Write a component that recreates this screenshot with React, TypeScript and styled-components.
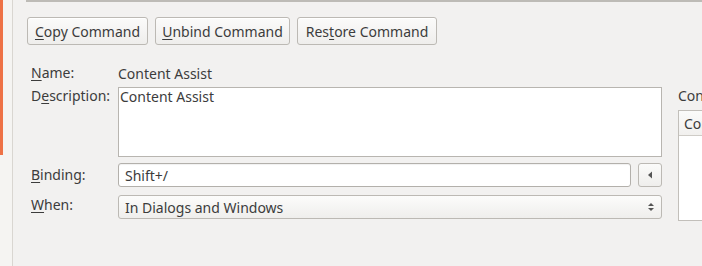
import React from "react";
import styled, { createGlobalStyle } from "styled-components";

const Global = createGlobalStyle`
  html, body { margin: 0; padding: 0; background: #f2f1f0; }
  body { font-family: "Noto Sans", "DejaVu Sans", sans-serif; font-size: 14px; color: #3c3c3c; }
  * { box-sizing: border-box; }
`;

const Page = styled.div`
  display: flex;
  width: 702px;
  height: 266px;
  overflow: hidden;
  background: #f2f1f0;
`;

const Sidebar = styled.div`
  width: 13px;
  flex: none;
  border-right: 1px solid #d9d6d1;
  background: #f5f4f2;
`;

const OrangeBar = styled.div`
  width: 3px;
  height: 155px;
  background: #ee7246;
`;

const Main = styled.div`
  flex: 1;
  padding-left: 14px;
  display: flex;
  flex-direction: column;
  min-width: 0;
`;

const TopRule = styled.div`
  height: 2px;
  background: #bdbbb6;
  margin-left: -1px;
  margin-right: -20px;
`;

const ButtonBar = styled.div`
  display: flex;
  gap: 7px;
  margin-top: 15px;
`;

const Button = styled.button<{ $w: number }>`
  width: ${(p) => p.$w}px;
  height: 28px;
  border: 1px solid #bcb9b4;
  border-radius: 3px;
  background: linear-gradient(#fbfbfa, #efeeec);
  font: inherit;
  color: #3c3c3c;
  padding: 0;
  box-shadow: inset 0 1px 0 #ffffff;
`;

const U = styled.span`
  text-decoration: underline;
  text-underline-offset: 2px;
`;

const Body = styled.div`
  display: flex;
  margin-top: 19px;
`;

const Form = styled.div`
  width: 635px;
  padding-left: 4px;
  display: grid;
  grid-template-columns: 87px 1fr;
  grid-template-rows: 18px 70px 24px 24px;
  row-gap: 5px;
  flex: none;
`;

const Label = styled.div<{ $top?: boolean; $mt?: number }>`
  display: flex;
  align-items: ${(p) => (p.$top ? "flex-start" : "center")};
  line-height: 18px;
  margin-top: ${(p) => p.$mt ?? 0}px;
`;

const Value = styled.div`
  display: flex;
  align-items: center;
`;

const TextArea = styled.div`
  border: 1px solid #b8b5b0;
  background: #fff;
  padding: 0 1px;
  line-height: 18px;
`;

const BindingRow = styled.div`
  display: flex;
  gap: 7px;
  margin-top: 1px;
`;

const Input = styled.div`
  flex: 1;
  height: 24px;
  border: 1px solid #b3b0ab;
  border-radius: 3px;
  background: #fff;
  padding: 0 6px;
  display: flex;
  align-items: center;
  box-shadow: inset 0 1px 1px rgba(0, 0, 0, 0.06);
`;

const SmallButton = styled.div`
  width: 24px;
  height: 24px;
  border: 1px solid #bcb9b4;
  border-radius: 3px;
  background: linear-gradient(#fbfbfa, #efeeec);
  display: flex;
  align-items: center;
  justify-content: center;
`;

const Combo = styled.div`
  height: 24px;
  margin-top: 4px;
  border: 1px solid #bcb9b4;
  border-radius: 3px;
  background: linear-gradient(#fcfcfb, #efeeec);
  padding: 0 6px;
  display: flex;
  align-items: center;
  justify-content: space-between;
`;

const Right = styled.div`
  margin-left: 16px;
  padding-top: 23px;
  width: 200px;
  flex: none;
`;

const RightTitle = styled.div`
  line-height: 18px;
`;

const Table = styled.div`
  margin-top: 5px;
  height: 111px;
  border: 1px solid #c2bfba;
  background: #fff;
`;

const TableHead = styled.div`
  height: 25px;
  border-bottom: 1px solid #cfccc7;
  background: linear-gradient(#fbfbfa, #f1f0ee);
  padding-left: 5px;
  display: flex;
  align-items: center;
`;

export default function App() {
  return (
    <Page>
      <Global />
      <Sidebar>
        <OrangeBar />
      </Sidebar>
      <Main>
        <TopRule />
        <ButtonBar>
          <Button $w={121}>
            <U>C</U>opy Command
          </Button>
          <Button $w={135}>
            <U>U</U>nbind Command
          </Button>
          <Button $w={140}>
            Res<U>t</U>ore Command
          </Button>
        </ButtonBar>
        <Body>
          <Form>
            <Label>
              <U>N</U>ame:
            </Label>
            <Value>Content Assist</Value>
            <Label $top>
              D<U>e</U>scription:
            </Label>
            <TextArea>Content Assist</TextArea>
            <Label $mt={1}>
              <U>B</U>inding:
            </Label>
            <BindingRow>
              <Input>Shift+/</Input>
              <SmallButton>
                <svg width="6" height="8" viewBox="0 0 6 8">
                  <path d="M5 0.5 L1 4 L5 7.5 Z" fill="#555" />
                </svg>
              </SmallButton>
            </BindingRow>
            <Label $mt={4}>
              <U>W</U>hen:
            </Label>
            <Combo>
              <span>In Dialogs and Windows</span>
              <svg width="8" height="12" viewBox="0 0 8 12">
                <path d="M1 5 L4 2 L7 5 Z" fill="#555" />
                <path d="M1 7 L4 10 L7 7 Z" fill="#555" />
              </svg>
            </Combo>
          </Form>
          <Right>
            <RightTitle>Conflicts:</RightTitle>
            <Table>
              <TableHead>Command</TableHead>
            </Table>
          </Right>
        </Body>
      </Main>
    </Page>
  );
}
